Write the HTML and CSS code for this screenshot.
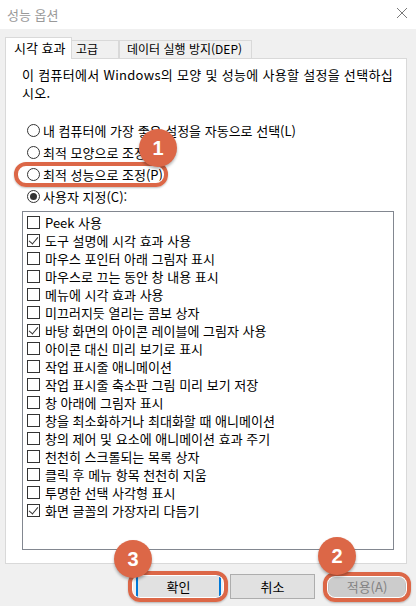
FILE: index.html
```html
<!DOCTYPE html>
<html lang="ko">
<head>
    <meta charset="UTF-8">
    <meta name="viewport" content="width=device-width, initial-scale=1.0">
    <title>성능 옵션</title>
    <link rel="stylesheet" href="styles.css">
</head>
<body>
    <div class="window">
        <div class="titlebar">
            <span class="title">성능 옵션</span>
            <svg class="close" width="12" height="12" viewBox="0 0 12 12">
                <path d="M1 1 L11 11 M11 1 L1 11" stroke="#7a7a7a" stroke-width="1" fill="none"/>
            </svg>
        </div>
        <div class="body">
            <div class="tabs">
                <div class="tab tab-active">시각 효과</div>
                <div class="tab tab-adv">고급</div>
                <div class="tab tab-dep">데이터 실행 방지(DEP)</div>
            </div>
            <div class="panel">
                <p class="intro">이 컴퓨터에서 Windows의 모양 및 성능에 사용할 설정을 선택하십시오.</p>
                <div class="options">
                    <div class="radio"><span class="dot"></span>내 컴퓨터에 가장 좋은 설정을 자동으로 선택(L)</div>
                    <div class="radio"><span class="dot"></span>최적 모양으로 조정(B)</div>
                    <div class="radio"><span class="dot"></span>최적 성능으로 조정(P)</div>
                    <div class="radio"><span class="dot dot-on"></span>사용자 지정(C):</div>
                </div>
                <ul class="list">
                    <li><span class="box"></span>Peek 사용</li>
                    <li><span class="box box-on"></span>도구 설명에 시각 효과 사용</li>
                    <li><span class="box"></span>마우스 포인터 아래 그림자 표시</li>
                    <li><span class="box"></span>마우스로 끄는 동안 창 내용 표시</li>
                    <li><span class="box"></span>메뉴에 시각 효과 사용</li>
                    <li><span class="box"></span>미끄러지듯 열리는 콤보 상자</li>
                    <li><span class="box box-on"></span>바탕 화면의 아이콘 레이블에 그림자 사용</li>
                    <li><span class="box"></span>아이콘 대신 미리 보기로 표시</li>
                    <li><span class="box"></span>작업 표시줄 애니메이션</li>
                    <li><span class="box"></span>작업 표시줄 축소판 그림 미리 보기 저장</li>
                    <li><span class="box"></span>창 아래에 그림자 표시</li>
                    <li><span class="box"></span>창을 최소화하거나 최대화할 때 애니메이션</li>
                    <li><span class="box"></span>창의 제어 및 요소에 애니메이션 효과 주기</li>
                    <li><span class="box"></span>천천히 스크롤되는 목록 상자</li>
                    <li><span class="box"></span>클릭 후 메뉴 항목 천천히 지움</li>
                    <li><span class="box"></span>투명한 선택 사각형 표시</li>
                    <li><span class="box box-on"></span>화면 글꼴의 가장자리 다듬기</li>
                </ul>
            </div>
            <div class="buttons">
                <button class="btn btn-ok">확인</button>
                <button class="btn btn-cancel">취소</button>
                <button class="btn btn-apply" disabled>적용(A)</button>
            </div>
        </div>

        <!-- annotation marks over the dialog -->
        <div class="mark mark-perf"></div>
        <div class="mark mark-ok"></div>
        <div class="mark mark-apply"></div>
        <div class="badge badge-1">1</div>
        <div class="badge badge-2">2</div>
        <div class="badge badge-3">3</div>
    </div>
</body>
</html>
```

FILE: styles.css
```css
body {
    margin: 0;
    font-family: "Noto Sans CJK KR", "Noto Sans", sans-serif;
    font-size: 13px;
    color: #000;
}
.window {
    position: relative;
    width: 416px;
    height: 606px;
    background-color: #f0f0f0;
    overflow: hidden;
}
.titlebar {
    height: 29px;
    background-color: #fff;
    display: flex;
    align-items: center;
    justify-content: space-between;
    padding: 0 8px 0 7px;
}
.title {
    color: #999;
    font-size: 13px;
    margin-top: -1px;
}
.close {
    margin-top: -3px;
}
.body {
    padding: 8px 9px 0 5px;
}

/* tab strip */
.tabs {
    display: flex;
    align-items: flex-end;
    height: 21px;
    font-size: 12px;
}
.tab {
    box-sizing: border-box;
    height: 18px;
    line-height: 16px;
    border: 1px solid #d9d9d9;
    border-bottom: none;
    background-color: #f0f0f0;
    white-space: nowrap;
}
.tab-active {
    position: relative;
    z-index: 1;
    height: 22px;
    line-height: 19px;
    margin-bottom: -1px;
    width: 67px;
    padding-left: 8px;
    background-color: #fff;
    font-size: 13px;
}
.tab-adv {
    width: 47px;
    padding-left: 4px;
    border-left: none;
}
.tab-dep {
    width: 133px;
    padding-left: 7px;
}
.panel {
    height: 506px;
    box-sizing: border-box;
    background-color: #fff;
    border: 1px solid #d9d9d9;
    padding: 7px 8px 0 16px;
}
.intro {
    margin: 0;
    max-width: 376px;
    line-height: 18px;
    letter-spacing: 0.3px;
}
.options {
    margin-top: 17px;
}
.radio {
    display: flex;
    align-items: center;
    height: 22px;
}
.dot {
    box-sizing: border-box;
    width: 13px;
    height: 13px;
    border: 1px solid #333;
    border-radius: 50%;
    margin: 0 3px 0 5px;
    display: flex;
    align-items: center;
    justify-content: center;
}
.dot-on::after {
    content: "";
    width: 7px;
    height: 7px;
    border-radius: 50%;
    background-color: #333;
}
.list {
    list-style: none;
    margin: 4px 4px 0 0;
    padding: 1px 0 0 4px;
    height: 336px;
    border: 1px solid #828790;
}
.list li {
    display: flex;
    align-items: center;
    height: 18px;
}
.box {
    box-sizing: border-box;
    width: 13px;
    height: 13px;
    border: 1px solid #333;
    margin-right: 5px;
    position: relative;
}
.box-on::after {
    content: "";
    position: absolute;
    left: 3px;
    top: 0;
    width: 4px;
    height: 8px;
    border: solid #333;
    border-width: 0 1px 1px 0;
    transform: rotate(40deg);
}

/* dialog buttons */
.buttons {
    display: flex;
    margin-top: 10px;
    padding-left: 131px;
}
.btn {
    box-sizing: border-box;
    width: 85px;
    height: 25px;
    margin-right: 9px;
    background-color: #e1e1e1;
    border: 1px solid #adadad;
    font-family: inherit;
    font-size: 13px;
    color: #000;
    padding: 0;
}
.btn-ok {
    border: 2px solid #0078d7;
}
.btn-apply {
    width: 78px;
    margin-left: 4px;
    margin-right: 0;
    background-color: #cccccc;
    border-color: #bfbfbf;
    color: #838383;
}

/* orange call-outs */
.mark {
    position: absolute;
    box-sizing: border-box;
    border: 4px solid #dc6747;
    border-radius: 12px;
    box-shadow: inset 0 0 0 1px #fff, 0 1px 2px rgba(0, 0, 0, 0.25);
}
.mark-perf {
    left: 14px;
    top: 162px;
    width: 154px;
    height: 25px;
}
.mark-ok {
    left: 128px;
    top: 571px;
    width: 100px;
    height: 31px;
}
.mark-apply {
    left: 323px;
    top: 572px;
    width: 88px;
    height: 30px;
}
.badge {
    position: absolute;
    width: 38px;
    height: 38px;
    border-radius: 50%;
    background-color: #dc6747;
    color: #fff;
    font-family: "Liberation Sans", Arial, sans-serif;
    font-weight: bold;
    font-size: 20px;
    display: flex;
    align-items: center;
    justify-content: center;
    box-shadow: 0 2px 3px rgba(0, 0, 0, 0.3);
}
.badge-1 {
    left: 139px;
    top: 129px;
}
.badge-2 {
    left: 318px;
    top: 537px;
}
.badge-3 {
    left: 114px;
    top: 540px;
}
```
